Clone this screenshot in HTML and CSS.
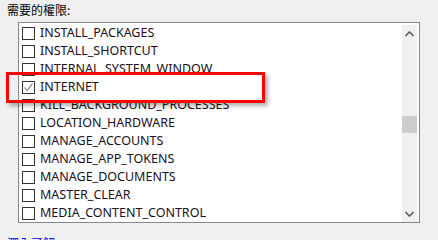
FILE: index.html
```html
<!DOCTYPE html>
<html>
<head>
<meta charset="utf-8">
<link rel="stylesheet" href="styles.css">
</head>
<body>
<div class="page">
  <div class="label">需要的權限:</div>
  <div class="listbox">
    <div class="items">
      <div class="row"><span class="cb"></span><span class="txt">INSTALL_PACKAGES</span></div>
      <div class="row"><span class="cb"></span><span class="txt">INSTALL_SHORTCUT</span></div>
      <div class="row"><span class="cb"></span><span class="txt">INTERNAL_SYSTEM_WINDOW</span></div>
      <div class="row"><span class="cb checked"><svg width="11" height="11" viewBox="0 0 11 11"><path d="M1.5 5.5 L4.2 8.5 L9.5 1.5" fill="none" stroke="#707070" stroke-width="1.1"/></svg></span><span class="txt">INTERNET</span></div>
      <div class="row"><span class="cb"></span><span class="txt">KILL_BACKGROUND_PROCESSES</span></div>
      <div class="row"><span class="cb"></span><span class="txt">LOCATION_HARDWARE</span></div>
      <div class="row"><span class="cb"></span><span class="txt">MANAGE_ACCOUNTS</span></div>
      <div class="row"><span class="cb"></span><span class="txt">MANAGE_APP_TOKENS</span></div>
      <div class="row"><span class="cb"></span><span class="txt">MANAGE_DOCUMENTS</span></div>
      <div class="row"><span class="cb"></span><span class="txt">MASTER_CLEAR</span></div>
      <div class="row"><span class="cb"></span><span class="txt">MEDIA_CONTENT_CONTROL</span></div>
    </div>
    <div class="scrollbar">
      <div class="arrow"><svg width="9" height="6" viewBox="0 0 9 6"><path d="M0.5 5 L4.5 1 L8.5 5" fill="none" stroke="#606060" stroke-width="1.6"/></svg></div>
      <div class="track"><div class="thumb"></div></div>
      <div class="arrow"><svg width="9" height="6" viewBox="0 0 9 6"><path d="M0.5 1 L4.5 5 L8.5 1" fill="none" stroke="#606060" stroke-width="1.6"/></svg></div>
    </div>
  </div>
  <div class="link">深入了解</div>
  <div class="highlight"></div>
</div>
</body>
</html>
```
FILE: styles.css
```css
html, body {
  margin: 0;
  padding: 0;
  background: #f0f0f0;
  overflow: hidden;
}
.page {
  position: relative;
  width: 438px;
  height: 240px;
  font-family: "Noto Sans", "Noto Sans CJK TC", sans-serif;
  font-size: 12px;
  color: #000;
}
.label {
  font-family: "Noto Sans CJK TC", sans-serif;
  font-size: 12px;
  line-height: 16px;
  padding: 2px 0 0 7px;
  height: 20px;
  box-sizing: border-box;
}
.listbox {
  margin: 2px 0 0 18px;
  width: 402px;
  height: 201px;
  box-sizing: border-box;
  border: 1px solid #828790;
  background: #fff;
  padding: 1px 2px 0 1px;
  display: flex;
  overflow: hidden;
}
.items {
  flex: 1;
  padding-top: 0;
}
.row {
  height: 18px;
  display: flex;
  align-items: center;
}
.cb {
  width: 13px;
  height: 13px;
  box-sizing: border-box;
  border: 1px solid #333;
  background: #fff;
  margin-left: 2px;
  margin-right: 5px;
  display: flex;
  align-items: center;
  justify-content: center;
}
.txt {
  font-size: 12.5px;
  line-height: 18px;
  white-space: nowrap;
  color: #1a1020;
}
.scrollbar {
  width: 15px;
  height: 197px;
  margin-top: 1px;
  background: #f0f0f0;
  display: flex;
  flex-direction: column;
}
.arrow {
  height: 17px;
  display: flex;
  align-items: center;
  justify-content: center;
}
.track {
  flex: 1;
  position: relative;
}
.thumb {
  position: absolute;
  left: 0;
  right: 0;
  top: 74px;
  height: 17px;
  background: #cdcdcd;
}
.link {
  font-family: "Noto Sans CJK TC", sans-serif;
  color: #0000ff;
  padding: 12px 0 0 7px;
  line-height: 16px;
}
.highlight {
  position: absolute;
  left: 6px;
  top: 72px;
  width: 259px;
  height: 31px;
  box-sizing: border-box;
  border: 3px solid #ff0000;
  box-shadow: 3px 3px 4px rgba(0,0,0,0.3);
}
```
